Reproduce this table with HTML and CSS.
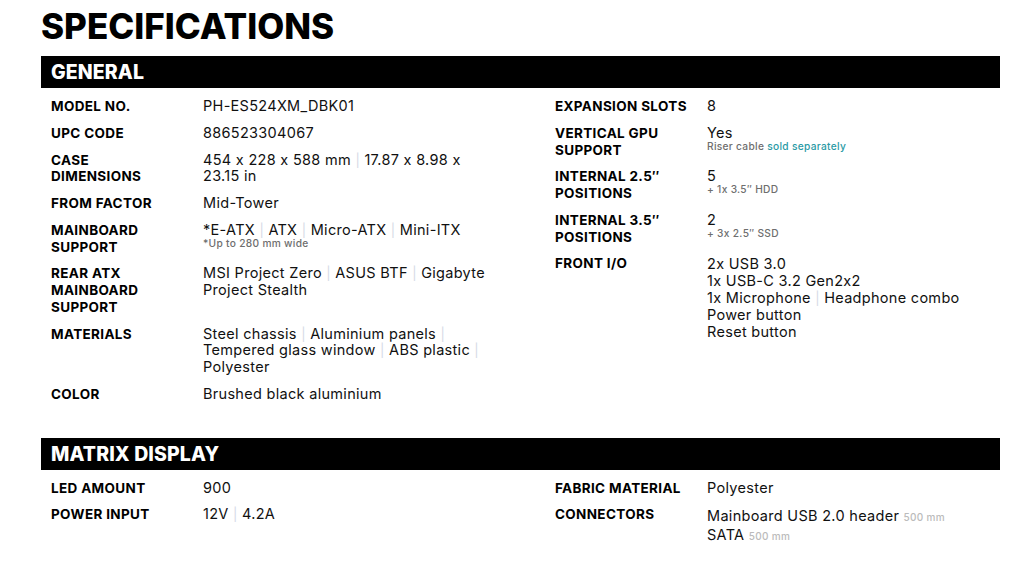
FILE: index.html
```html
<!DOCTYPE html>
<html lang="en">
<head>
<meta charset="utf-8">
<title>Specifications</title>
<link rel="stylesheet" href="styles.css">
</head>
<body>
<main class="page">
  <h1 class="title">SPECIFICATIONS</h1>

  <section class="spec-section">
    <h2 class="bar">GENERAL</h2>
    <div class="cols">
      <dl class="col">
        <div class="row"><dt>MODEL NO.</dt><dd>PH-ES524XM_DBK01</dd></div>
        <div class="row"><dt>UPC CODE</dt><dd>886523304067</dd></div>
        <div class="row"><dt>CASE<br>DIMENSIONS</dt><dd>454 x 228 x 588 mm <span class="sep">|</span> 17.87 x 8.98 x<br>23.15 in</dd></div>
        <div class="row"><dt>FROM FACTOR</dt><dd>Mid-Tower</dd></div>
        <div class="row"><dt>MAINBOARD<br>SUPPORT</dt><dd>*E-ATX <span class="sep">|</span> ATX <span class="sep">|</span> Micro-ATX <span class="sep">|</span> Mini-ITX<span class="note">*Up to 280 mm wide</span></dd></div>
        <div class="row"><dt>REAR ATX<br>MAINBOARD<br>SUPPORT</dt><dd>MSI Project Zero <span class="sep">|</span> ASUS BTF <span class="sep">|</span> Gigabyte<br>Project Stealth</dd></div>
        <div class="row"><dt>MATERIALS</dt><dd>Steel chassis <span class="sep">|</span> Aluminium panels <span class="sep">|</span><br>Tempered glass window <span class="sep">|</span> ABS plastic <span class="sep">|</span><br>Polyester</dd></div>
        <div class="row"><dt>COLOR</dt><dd>Brushed black aluminium</dd></div>
      </dl>
      <dl class="col">
        <div class="row"><dt>EXPANSION SLOTS</dt><dd>8</dd></div>
        <div class="row"><dt>VERTICAL GPU<br>SUPPORT</dt><dd>Yes<span class="note">Riser cable <span class="accent">sold separately</span></span></dd></div>
        <div class="row"><dt>INTERNAL 2.5″<br>POSITIONS</dt><dd>5<span class="note">+ 1x 3.5″ HDD</span></dd></div>
        <div class="row"><dt>INTERNAL 3.5″<br>POSITIONS</dt><dd>2<span class="note">+ 3x 2.5″ SSD</span></dd></div>
        <div class="row"><dt>FRONT I/O</dt><dd class="io">2x USB 3.0<br>1x USB-C 3.2 Gen2x2<br>1x Microphone <span class="sep">|</span> Headphone combo<br>Power button<br>Reset button</dd></div>
      </dl>
    </div>
  </section>

  <section class="spec-section">
    <h2 class="bar">MATRIX DISPLAY</h2>
    <div class="cols">
      <dl class="col">
        <div class="row"><dt>LED AMOUNT</dt><dd>900</dd></div>
        <div class="row"><dt>POWER INPUT</dt><dd>12V <span class="sep">|</span> 4.2A</dd></div>
      </dl>
      <dl class="col">
        <div class="row"><dt>FABRIC MATERIAL</dt><dd>Polyester</dd></div>
        <div class="row"><dt>CONNECTORS</dt><dd class="conn">Mainboard USB 2.0 header <span class="len">500 mm</span><br>SATA <span class="len">500 mm</span></dd></div>
      </dl>
    </div>
  </section>
</main>
</body>
</html>
```

FILE: styles.css
```css
* { box-sizing: border-box; }

html, body {
  margin: 0;
  padding: 0;
  background: #fff;
  color: #000;
  font-family: "Inter", "Liberation Sans", sans-serif;
}

.page {
  width: 959px;
  margin-left: 41px;
  padding-top: 3px;
}

.title {
  margin: 0;
  font-size: 35px;
  line-height: 47px;
  font-weight: 800;
  letter-spacing: 0;
}

.spec-section {
  margin-top: 6px;
}

.spec-section + .spec-section {
  margin-top: 35px;
}

.bar {
  margin: 0;
  height: 32px;
  background: #000;
  color: #fff;
  font-size: 19.5px;
  font-weight: 800;
  line-height: 33px;
  padding-left: 10px;
  letter-spacing: 0.1px;
}

.cols {
  display: grid;
  grid-template-columns: 504px 1fr;
  padding: 10px 0 0 10px;
}

.col {
  margin: 0;
  display: flex;
  flex-direction: column;
  gap: 10px;
}

.row {
  display: grid;
  grid-template-columns: 152px 1fr;
}

dt {
  font-size: 13.5px;
  font-weight: 700;
  line-height: 16.75px;
  letter-spacing: 0.35px;
}

dd {
  margin: 0;
  font-size: 14.5px;
  line-height: 16.75px;
  letter-spacing: 0.3px;
  color: #111;
}

.io {
  line-height: 17px;
}

.sep {
  color: #d5d9e6;
  font-size: 13px;
  line-height: 0;
}

.note {
  display: block;
  font-size: 10.2px;
  line-height: 10px;
  font-weight: 500;
  color: #6e6e6e;
  letter-spacing: 0.3px;
  margin-top: -1px;
}

.accent {
  color: #2a9aa5;
}

.conn {
  line-height: 19px;
}

.len {
  font-size: 10px;
  line-height: 0;
  font-weight: 500;
  color: #bbb;
}
```
